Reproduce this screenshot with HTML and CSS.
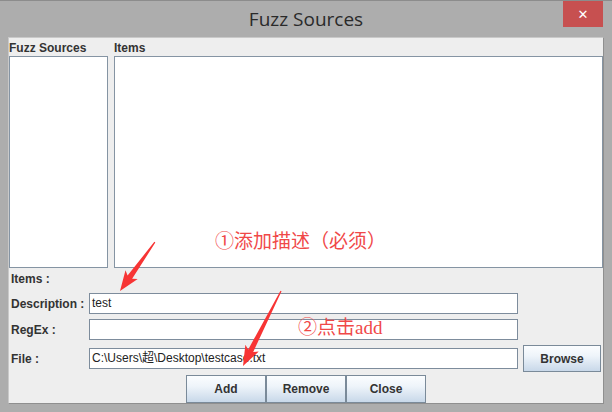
FILE: index.html
```html
<!DOCTYPE html>
<html lang="zh-CN">
<head>
  <meta charset="UTF-8">
  <title>Fuzz Sources</title>
  <link rel="stylesheet" href="styles.css">
</head>
<body>
  <div class="window">
    <div class="titlebar">
      <span class="title">Fuzz Sources</span>
      <div class="close-btn">&#x2715;</div>
    </div>

    <div class="panel">
      <div class="headers">
        <div class="head sources-head">Fuzz Sources</div>
        <div class="head">Items</div>
      </div>
      <div class="lists">
        <div class="list sources-list"></div>
        <div class="list items-list"></div>
      </div>

      <div class="label items-label">Items :</div>

      <div class="row row-desc">
        <div class="label">Description :</div>
        <div class="field">test</div>
      </div>
      <div class="row row-regex">
        <div class="label">RegEx :</div>
        <div class="field"></div>
      </div>
      <div class="row row-file">
        <div class="label">File :</div>
        <div class="field">C:\Users\超\Desktop\testcase.txt</div>
        <div class="btn browse">Browse</div>
      </div>

      <div class="actions">
        <div class="btn">Add</div>
        <div class="btn">Remove</div>
        <div class="btn">Close</div>
      </div>
    </div>
  </div>

  <!-- screenshot annotations -->
  <div class="note note-one">①添加描述（必须）</div>
  <div class="note note-two">②点击add</div>
  <svg class="arrows" width="612" height="412" viewBox="0 0 612 412">
    <g transform="translate(120 291) rotate(125.5)">
      <polygon points="-60,-0.6 -17,-2.8 -20,-7.5 0,0 -20,7.5 -17,2.8 -60,0.6" />
    </g>
    <g transform="translate(243 366) rotate(116.9)">
      <polygon points="-84,-0.6 -17,-2.8 -20,-7.5 0,0 -20,7.5 -17,2.8 -84,0.6" />
    </g>
  </svg>
</body>
</html>
```

FILE: styles.css
```css
body {
  margin: 0;
  width: 612px;
  height: 412px;
  position: relative;
  overflow: hidden;
  background: #adadad;
  font-family: 'Liberation Sans', Arial, 'Noto Sans CJK SC', sans-serif;
  font-size: 12px;
  color: #333;
}

.window {
  display: flex;
  flex-direction: column;
  height: 412px;
  box-sizing: border-box;
  border-top: 1px solid #8c8c8c;
}

.titlebar {
  position: relative;
  height: 36px;
  display: flex;
  justify-content: center;
  align-items: center;
}

.title {
  font-family: 'Open Sans', 'Noto Sans', sans-serif;
  font-size: 19px;
  color: #2a2a2a;
  margin-top: -1px;
}

.close-btn {
  position: absolute;
  top: 0;
  right: 9px;
  width: 40px;
  height: 26px;
  background: #c75050;
  color: #fff;
  font-family: 'DejaVu Sans', sans-serif;
  font-size: 13px;
  font-weight: bold;
  display: flex;
  justify-content: center;
  align-items: center;
}

.panel {
  margin: 0 8px 0 8px;
  height: 367px;
  box-sizing: border-box;
  border: 1px solid #c9c9c9;
  border-right-color: #8f8f8f;
  border-bottom-color: #8f8f8f;
  background: #eeeeee;
  display: flex;
  flex-direction: column;
}

.headers {
  display: flex;
  height: 18px;
  align-items: center;
  padding-top: 1px;
  box-sizing: border-box;
}

.head {
  font-weight: bold;
  color: #333;
}

.sources-head {
  width: 105px;
}

.lists {
  display: flex;
  height: 212px;
  gap: 6px;
}

.list {
  background: #fff;
  border: 1px solid #8594a3;
  box-sizing: border-box;
}

.sources-list {
  width: 99px;
}

.items-list {
  flex: 1;
}

.label {
  font-weight: bold;
  color: #333;
  width: 80px;
  padding-left: 2px;
  box-sizing: border-box;
  flex-shrink: 0;
}

.items-label {
  height: 23px;
  line-height: 23px;
}

.row {
  display: flex;
  align-items: center;
}

.row-desc {
  margin-top: 2px;
  height: 21px;
}

.row-regex {
  margin-top: 5px;
  height: 21px;
}

.row-file {
  margin-top: 5px;
  height: 27px;
}

.field {
  width: 429px;
  height: 21px;
  box-sizing: border-box;
  border: 1px solid #7d8c9c;
  background: #fff;
  padding-left: 2px;
  line-height: 19px;
  color: #222;
}

.btn {
  width: 80px;
  height: 28px;
  box-sizing: border-box;
  border: 1px solid #7a8a99;
  background: linear-gradient(to bottom, #fbfdff 0%, #eef4fa 40%, #c8d8e9 100%);
  font-weight: bold;
  color: #333;
  display: flex;
  justify-content: center;
  align-items: center;
}

.browse {
  width: 78px;
  height: 27px;
  margin-left: 5px;
}

.actions {
  margin-top: 3px;
  display: flex;
  justify-content: center;
}

.note {
  position: absolute;
  font-family: 'Liberation Serif', 'Noto Sans CJK SC', serif;
  font-size: 19px;
  line-height: 1;
  color: #f04848;
}

.note-one {
  left: 215px;
  top: 232px;
}

.note-two {
  left: 298px;
  top: 318px;
}

.arrows {
  position: absolute;
  left: 0;
  top: 0;
  pointer-events: none;
}

.arrows polygon {
  fill: #f73434;
}
```
